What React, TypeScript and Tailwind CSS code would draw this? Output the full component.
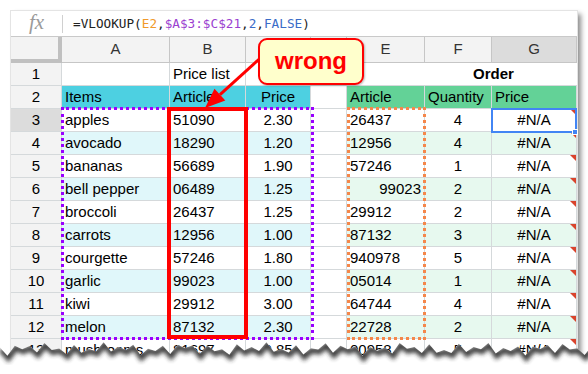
import React from "react";

type Row = {
  n: string;
  a: string;
  b: string;
  c: string;
  e: string;
  f: string;
  eRight?: boolean;
};

const rows: Row[] = [
  { n: "3", a: "apples", b: "51090", c: "2.30", e: "26437", f: "4" },
  { n: "4", a: "avocado", b: "18290", c: "1.20", e: "12956", f: "4" },
  { n: "5", a: "bananas", b: "56689", c: "1.90", e: "57246", f: "1" },
  { n: "6", a: "bell pepper", b: "06489", c: "1.25", e: "99023", f: "2", eRight: true },
  { n: "7", a: "broccoli", b: "26437", c: "1.25", e: "29912", f: "2" },
  { n: "8", a: "carrots", b: "12956", c: "1.00", e: "87132", f: "3" },
  { n: "9", a: "courgette", b: "57246", c: "1.80", e: "940978", f: "5" },
  { n: "10", a: "garlic", b: "99023", c: "1.00", e: "05014", f: "1" },
  { n: "11", a: "kiwi", b: "29912", c: "3.00", e: "64744", f: "4" },
  { n: "12", a: "melon", b: "87132", c: "2.30", e: "22728", f: "2" },
  { n: "13", a: "mushrooms", b: "81697", c: "0.85", e: "00958", f: "5" },
];

const grid = "grid grid-cols-[51px_108px_76px_65px_36px_78px_67px_85px]";

const Cell = ({
  children,
  className = "",
}: {
  children?: React.ReactNode;
  className?: string;
}) => (
  <div
    className={`relative h-[23px] border-r border-b border-[#d5d9db] flex items-center px-[3px] text-[15px] text-black whitespace-nowrap overflow-hidden ${className}`}
  >
    {children}
  </div>
);

// little red error marker in the top right corner of a cell
const ErrorMark = () => (
  <svg className="absolute top-0 right-0" width="6" height="6" viewBox="0 0 6 6">
    <polygon points="0,0 6,0 6,6" fill="#d9432c" />
  </svg>
);

// bottom torn paper edge
const tornPoints = () => {
  const pts: [number, number][] = [];
  for (let i = 0; i <= 80; i++) {
    const x = i * 7.4;
    const y =
      19 +
      (i % 2 === 0 ? -3 : 3) +
      Math.sin(i * 1.7) * 2.5 +
      Math.cos(i * 0.63) * 1.5;
    pts.push([x, y]);
  }
  return pts;
};

const TornEdge = () => {
  const pts = tornPoints();
  const line = pts.map(([x, y]) => `${x.toFixed(1)},${y.toFixed(1)}`).join(" L ");
  const below = `M ${line} L 600,60 L 0,60 Z`;
  return (
    <svg
      className="absolute left-0 top-[330px] pointer-events-none"
      width="588"
      height="44"
      viewBox="0 0 588 44"
    >
      <defs>
        <filter id="tornBlur" x="-5%" y="-50%" width="110%" height="200%">
          <feGaussianBlur stdDeviation="2" />
        </filter>
        <clipPath id="tornClip">
          <path d={below} />
        </clipPath>
      </defs>
      <path d={below} fill="#ffffff" />
      <g clipPath="url(#tornClip)">
        <path
          d={`M ${line}`}
          transform="translate(1,2)"
          fill="none"
          stroke="#2a2a2a"
          strokeWidth="6"
          filter="url(#tornBlur)"
          opacity="0.9"
        />
      </g>
    </svg>
  );
};

const Overlays = () => (
  <>
    {/* purple dotted A3:C12 */}
    <div className="absolute left-[50px] top-[96px] w-[253px] h-[233px] border-[3px] border-dotted border-[#9900ff] pointer-events-none" />
    {/* orange dotted E3:E12 */}
    <div className="absolute left-[336px] top-[96px] w-[79px] h-[233px] border-[3px] border-dotted border-[#f5874a] pointer-events-none" />
    {/* red box B3:B12 */}
    <div className="absolute left-[156px] top-[96px] w-[81px] h-[232px] border-4 border-[#ff0000] pointer-events-none" />
    {/* selected G3 */}
    <div className="absolute left-[480px] top-[97px] w-[86px] h-[25px] border-2 border-[#4285f4] pointer-events-none">
      <div className="absolute -right-[3px] -bottom-[4px] w-[6px] h-[6px] bg-[#4285f4] border border-white" />
    </div>
    {/* arrow */}
    <svg className="absolute left-0 top-0 pointer-events-none" width="566" height="140" viewBox="0 0 566 140">
      <line x1="255" y1="42" x2="209" y2="83.6" stroke="#ff0000" strokeWidth="3" />
      <polygon points="194,97 214.3,89.5 203.5,77.7" fill="#ff0000" />
    </svg>
    {/* callout */}
    <div className="absolute left-[247px] top-[27px] w-[106px] h-[47px] rounded-[9px] border-2 border-[#ff0000] bg-[#ffffcc] flex items-center justify-center shadow-[1px_1px_2px_rgba(0,0,0,0.25)]">
      <span className="text-[24px] font-bold text-[#ff0000] leading-none pb-[2px]">wrong</span>
    </div>
  </>
);

export default function App() {
  return (
    <div className="relative w-[588px] h-[374px] bg-white overflow-hidden font-['Liberation_Sans',Arial,sans-serif]">
      <div className="absolute left-[11px] top-[11px] w-[566px] bg-white shadow-[0_0_0_1px_#e4e4e4,4px_3px_5px_rgba(0,0,0,0.45)]">
        {/* formula bar */}
        <div className="h-[26px] flex items-center border-b border-[#c9c9c9]">
          <div className="w-[51px] flex justify-center">
            <span className="font-['Liberation_Serif',serif] italic text-[21px] text-[#9a9a9a] leading-none pb-[3px]">
              fx
            </span>
          </div>
          <div className="w-px h-[18px] bg-[#d0d0d0]" />
          <div className="ml-[10px] font-['DejaVu_Sans_Mono',monospace] text-[12.7px] text-[#222]">
            =VLOOKUP(<span className="text-[#f09a2a]">E2</span>,
            <span className="text-[#9b3fd0]">$A$3:$C$21</span>,
            <span className="text-[#3a6cc8]">2</span>,
            <span className="text-[#3a6cc8]">FALSE</span>)
          </div>
        </div>

        {/* column headers */}
        <div className={`${grid} h-[26px] text-[15px] text-[#333]`}>
          <div className="bg-[#f3f3f3] border-r-4 border-b-4 border-[#c0c0c0]" />
          {["A", "B", "C", "D", "E", "F", "G"].map((l) => (
            <div
              key={l}
              className={`flex items-center justify-center border-r border-b border-[#c6c6c6] ${
                l === "G" ? "bg-[#dcdcdc]" : "bg-[#f3f3f3]"
              }`}
            >
              {l}
            </div>
          ))}
        </div>

        {/* row 1 */}
        <div className={grid}>
          <Cell className="justify-center bg-[#f3f3f3] border-[#c6c6c6] text-[#333]">1</Cell>
          <Cell />
          <Cell>Price list</Cell>
          <Cell />
          <Cell />
          <div className="col-span-3 h-[23px] border-b border-[#d5d9db] flex items-center pl-[126px] text-[15px] font-bold text-black">
            Order
          </div>
        </div>

        {/* row 2 headers */}
        <div className={grid}>
          <Cell className="justify-center bg-[#f3f3f3] border-[#c6c6c6] text-[#333]">2</Cell>
          <Cell className="bg-[#4dd0e1]">Items</Cell>
          <Cell className="bg-[#4dd0e1]">Article</Cell>
          <Cell className="bg-[#4dd0e1] justify-center">Price</Cell>
          <Cell />
          <Cell className="bg-[#63d297]">Article</Cell>
          <Cell className="bg-[#63d297]">Quantity</Cell>
          <Cell className="bg-[#63d297]">Price</Cell>
        </div>

        {/* data */}
        {rows.map((r, i) => {
          const band = i % 2 === 1;
          const cyan = band ? "bg-[#e0f7fa]" : "bg-white";
          const green = band ? "bg-[#e7f9ef]" : "bg-white";
          return (
            <div key={r.n} className={grid}>
              <Cell
                className={`justify-center border-[#c6c6c6] text-[#333] ${
                  r.n === "3" ? "bg-[#dcdcdc]" : "bg-[#f3f3f3]"
                }`}
              >
                {r.n}
              </Cell>
              <Cell className={cyan}>{r.a}</Cell>
              <Cell className={cyan}>{r.b}</Cell>
              <Cell className={`${cyan} justify-center`}>{r.c}</Cell>
              <Cell />
              <Cell className={`${green} ${r.eRight ? "justify-end" : ""}`}>{r.e}</Cell>
              <Cell className={`${green} justify-center`}>{r.f}</Cell>
              <Cell className={`${green} justify-center`}>
                #N/A
                <ErrorMark />
              </Cell>
            </div>
          );
        })}

        <Overlays />
      </div>
      <TornEdge />
    </div>
  );
}
